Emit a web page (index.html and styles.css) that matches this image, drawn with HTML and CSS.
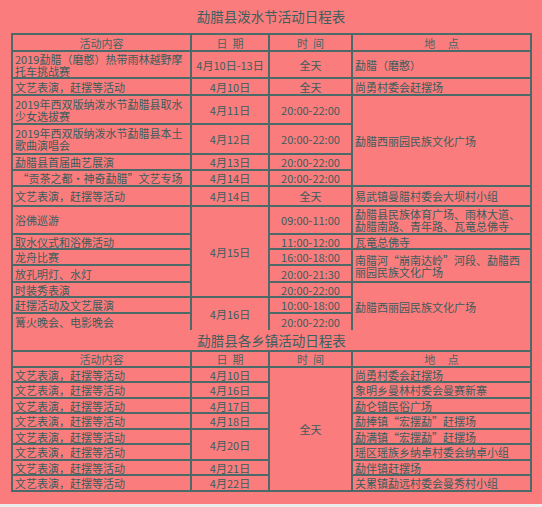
FILE: index.html
```html
<!DOCTYPE html>
<html lang="zh">
<head>
<meta charset="utf-8">
<link rel="stylesheet" href="styles.css">
</head>
<body>
<div class="page">
  <div class="title">勐腊县泼水节活动日程表</div>
  <table class="sched">
    <colgroup>
      <col class="c1"><col class="c2"><col class="c3"><col class="c4">
    </colgroup>
    <tr class="h17 hd">
      <td class="ctr">活动内容</td><td class="ctr">日&nbsp;&nbsp;期</td><td class="ctr">时&nbsp;&nbsp;间</td><td class="ctr">地&nbsp;&nbsp;&nbsp;&nbsp;&nbsp;点</td>
    </tr>
    <tr class="h27">
      <td>2019勐腊（磨憨）热带雨林越野摩<br>托车挑战赛</td><td class="ctr">4月10日-13日</td><td class="ctr">全天</td><td>勐腊（磨憨）</td>
    </tr>
    <tr class="h17">
      <td>文艺表演，赶摆等活动</td><td class="ctr">4月10日</td><td class="ctr">全天</td><td>尚勇村委会赶摆场</td>
    </tr>
    <tr class="h29">
      <td>2019年西双版纳泼水节勐腊县取水<br>少女选拔赛</td><td class="ctr">4月11日</td><td class="ctr">20:00-22:00</td><td rowspan="4">勐腊西丽园民族文化广场</td>
    </tr>
    <tr class="h30">
      <td>2019年西双版纳泼水节勐腊县本土<br>歌曲演唱会</td><td class="ctr">4月12日</td><td class="ctr">20:00-22:00</td>
    </tr>
    <tr class="h16">
      <td>勐腊县首届曲艺展演</td><td class="ctr">4月13日</td><td class="ctr">20:00-22:00</td>
    </tr>
    <tr class="h16">
      <td>&nbsp;“贡茶之都·神奇勐腊”文艺专场</td><td class="ctr">4月14日</td><td class="ctr">20:00-22:00</td>
    </tr>
    <tr class="h20">
      <td>文艺表演，赶摆等活动</td><td class="ctr">4月14日</td><td class="ctr">全天</td><td>易武镇曼腊村委会大坝村小组</td>
    </tr>
    <tr class="h28">
      <td>浴佛巡游</td><td class="ctr" rowspan="5">4月15日</td><td class="ctr">09:00-11:00</td><td>勐腊县民族体育广场、雨林大道、<br>勐腊南路、青年路、瓦竜总佛寺</td>
    </tr>
    <tr class="h15">
      <td>取水仪式和浴佛活动</td><td class="ctr">11:00-12:00</td><td>瓦竜总佛寺</td>
    </tr>
    <tr class="h16">
      <td>龙舟比赛</td><td class="ctr">16:00-18:00</td><td rowspan="2">南腊河“崩南达岭”河段、勐腊西<br>丽园民族文化广场</td>
    </tr>
    <tr class="h17">
      <td>放孔明灯、水灯</td><td class="ctr">20:00-21:30</td>
    </tr>
    <tr class="h15">
      <td>时装秀表演</td><td class="ctr">20:00-22:00</td><td rowspan="3">勐腊西丽园民族文化广场</td>
    </tr>
    <tr class="h16">
      <td>赶摆活动及文艺展演</td><td class="ctr" rowspan="2">4月16日</td><td class="ctr">10:00-18:00</td>
    </tr>
    <tr class="h17">
      <td>篝火晚会、电影晚会</td><td class="ctr">20:00-22:00</td>
    </tr>
    <tr class="h21">
      <td colspan="4" class="t2">勐腊县各乡镇活动日程表</td>
    </tr>
    <tr class="h16 hd">
      <td class="ctr">活动内容</td><td class="ctr">日&nbsp;&nbsp;期</td><td class="ctr">时&nbsp;&nbsp;间</td><td class="ctr">地&nbsp;&nbsp;&nbsp;&nbsp;&nbsp;点</td>
    </tr>
    <tr class="h15">
      <td>文艺表演，赶摆等活动</td><td class="ctr">4月10日</td><td class="ctr" rowspan="8">全天</td><td>尚勇村委会赶摆场</td>
    </tr>
    <tr class="h16">
      <td>文艺表演，赶摆等活动</td><td class="ctr">4月16日</td><td>象明乡曼林村委会曼赛新寨</td>
    </tr>
    <tr class="h15">
      <td>文艺表演，赶摆等活动</td><td class="ctr">4月17日</td><td>勐仑镇民俗广场</td>
    </tr>
    <tr class="h16">
      <td>文艺表演，赶摆等活动</td><td class="ctr">4月18日</td><td>勐捧镇“宏摆勐”赶摆场</td>
    </tr>
    <tr class="h15">
      <td>文艺表演，赶摆等活动</td><td class="ctr" rowspan="2">4月20日</td><td>勐满镇“宏摆勐”赶摆场</td>
    </tr>
    <tr class="h16">
      <td>文艺表演，赶摆等活动</td><td>瑶区瑶族乡纳卓村委会纳卓小组</td>
    </tr>
    <tr class="h15">
      <td>文艺表演，赶摆等活动</td><td class="ctr">4月21日</td><td>勐伴镇赶摆场</td>
    </tr>
    <tr class="h16">
      <td>文艺表演，赶摆等活动</td><td class="ctr">4月22日</td><td>关累镇勐远村委会曼秀村小组</td>
    </tr>
  </table>
  <div class="strip"></div>
</div>
</body>
</html>
```
FILE: styles.css
```css
html, body {
  margin: 0;
  padding: 0;
}
body {
  background: #ececec;
  font-family: "Noto Sans CJK SC", "Noto Sans", sans-serif;
  color: #3a5c5c;
}
.page {
  width: 542px;
  height: 504px;
  background: #fb7c7c;
  overflow: hidden;
}
.title {
  height: 33px;
  line-height: 33px;
  text-align: center;
  font-size: 13.5px;
  color: #3d5f5f;
}
.sched {
  margin-left: 11px;
  width: 519px;
  border-collapse: collapse;
  table-layout: fixed;
  font-size: 11px;
  line-height: 12px;
}
.c1 { width: 179px; }
.c2 { width: 78px; }
.c3 { width: 83px; }
.c4 { width: 179px; }
.sched td {
  border: 2px solid #4d6a6a;
  padding: 0 2px;
  vertical-align: middle;
  white-space: nowrap;
  overflow: hidden;
}
.sched .ctr { text-align: center; }
.hd td { color: #476464; }
.t2 {
  border-top-style: hidden !important;
  text-align: center;
  font-size: 13.5px;
  color: #3d5f5f;
}
.h15 { height: 15px; }
.h16 { height: 16px; }
.h17 { height: 17px; }
.h20 { height: 20px; }
.h21 { height: 21px; }
.h27 { height: 27px; }
.h28 { height: 28px; }
.h29 { height: 29px; }
.h30 { height: 30px; }
.strip { height: 3px; }
```
